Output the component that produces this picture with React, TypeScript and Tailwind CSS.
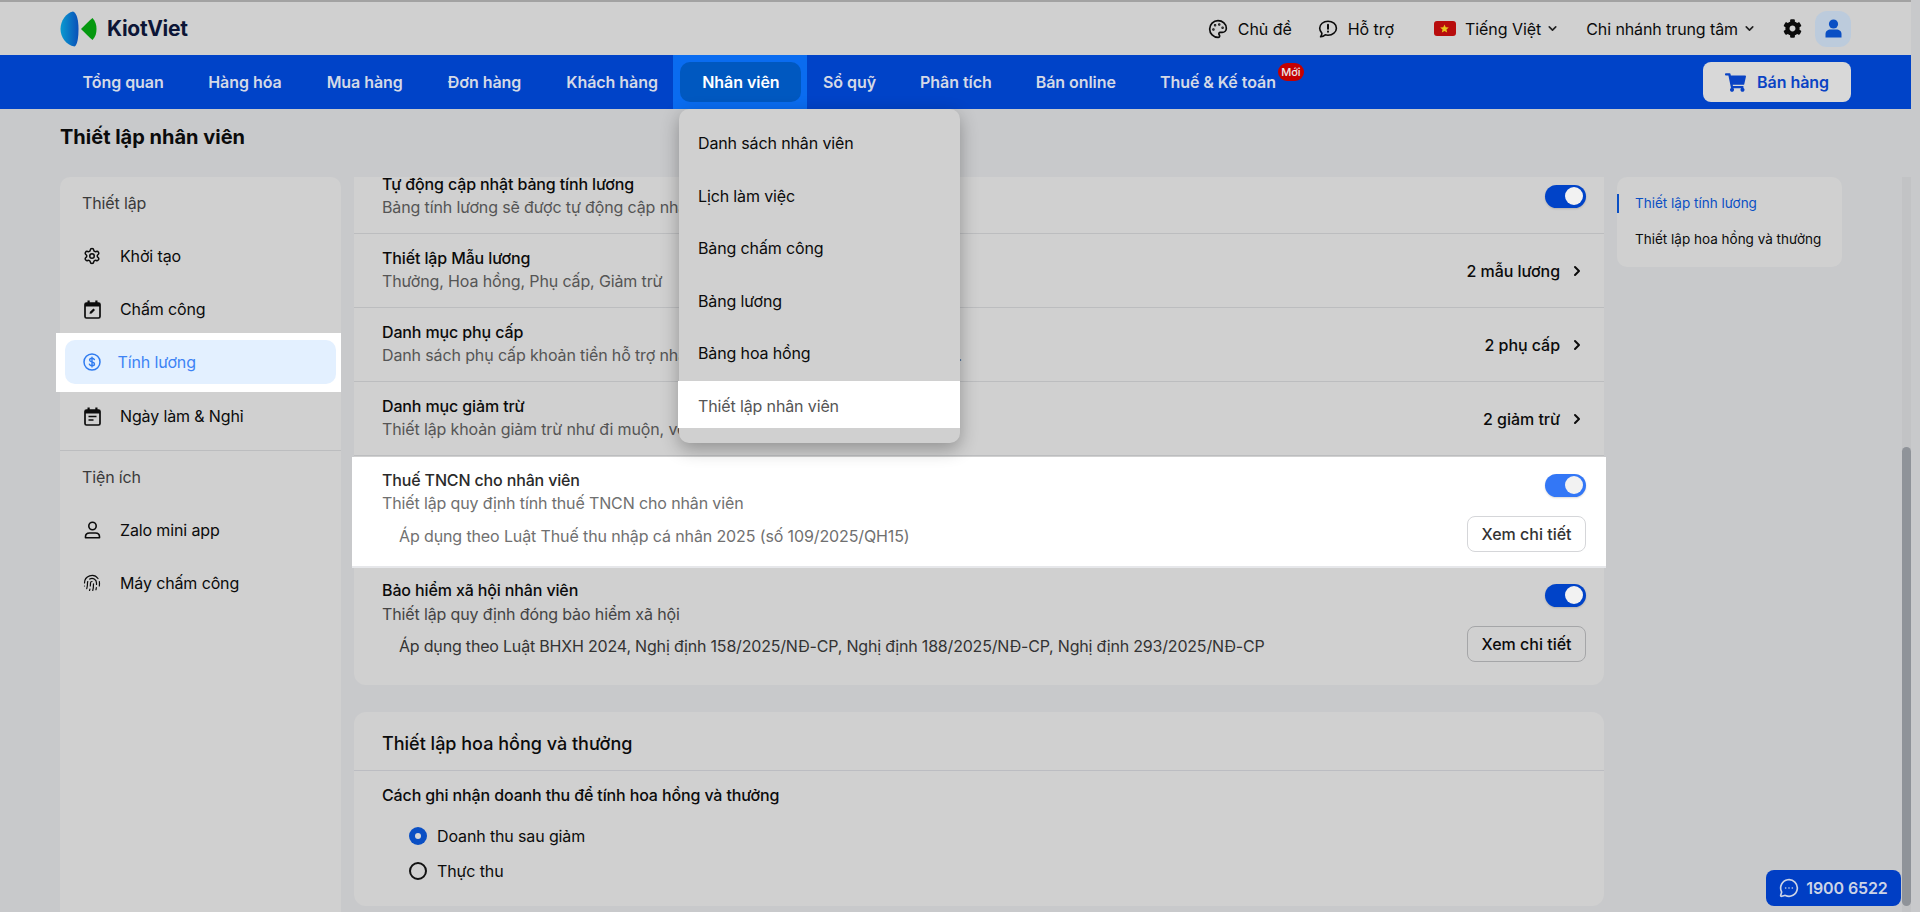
import React from "react";
import { ChevronDown, ChevronRight, Fingerprint, Palette, Settings, MessageCircleMore } from "lucide-react";
import { FaCog, FaShoppingCart } from "react-icons/fa";

const navItems = ["Tổng quan", "Hàng hóa", "Mua hàng", "Đơn hàng", "Khách hàng"];
const navItems2 = ["Sổ quỹ", "Phân tích", "Bán online"];
const menuItems = ["Danh sách nhân viên", "Lịch làm việc", "Bảng chấm công", "Bảng lương", "Bảng hoa hồng"];

function Logo() {
  return (
    <svg width="38" height="36" viewBox="0 0 38 36" className="shrink-0">
      <defs>
        <linearGradient id="lg1" x1="0" x2="1" y1="0" y2="0">
          <stop offset="0" stopColor="#0a9ad0" />
          <stop offset="1" stopColor="#0a50b8" />
        </linearGradient>
      </defs>
      <path d="M13 0.500C17 2 18.500 10 18.500 18C18.500 26 17.500 34 14.500 35.500C6 34 0.500 26 0.500 18C0.500 10 6 2 13 0.500Z" fill="url(#lg1)" />
      <path d="M32.500 7C35.500 10 36.500 14 36.500 18C36.500 22 35.500 26 32.500 29C29 26 24 21 21 18C24 15 29 10 32.500 7Z" fill="#05980f" />
    </svg>
  );
}

function HelpIcon() {
  return (
    <svg width="20" height="20" viewBox="0 0 20 20" fill="none" stroke="#0b0b0b" strokeWidth="1.6" strokeLinecap="round" strokeLinejoin="round">
      <path d="M10 2.200c4.600 0 8.400 3.100 8.400 7s-3.800 7-8.400 7c-1 0-2-.1-2.800-.4-1 .9-2.600 1.800-4.600 2 .8-1.100 1.300-2.400 1.300-3.500C2.800 13 1.700 11.200 1.700 9.200c0-3.900 3.700-7 8.300-7Z" />
      <path d="M10 5.800v4" strokeWidth="2" />
      <path d="M10 12.500v.2" strokeWidth="2" />
    </svg>
  );
}

function Flag() {
  return (
    <span className="flex h-[15px] w-[22px] items-center justify-center rounded-[3px] bg-[#b80c0c]">
      <svg width="9" height="9" viewBox="0 0 24 24"><path d="M12 1l3.200 7.600 8.300.7-6.300 5.400 1.900 8.100L12 18.500l-7.100 4.300 1.900-8.100L.5 9.300l8.300-.7z" fill="#e8c61c" /></svg>
    </span>
  );
}

function CalendarEditIcon() {
  return (
    <svg width="17" height="19" viewBox="0 0 17 19" fill="none">
      <rect x="1" y="3" width="15" height="15" rx="1.500" stroke="#0c0c0c" strokeWidth="1.700" />
      <rect x="1" y="3" width="15" height="3.500" fill="#0c0c0c" />
      <rect x="3.500" y="0.500" width="2.200" height="3.500" fill="#0c0c0c" />
      <rect x="11.300" y="0.500" width="2.200" height="3.500" fill="#0c0c0c" />
      <path d="M5.500 13.800l.5-2 3.500-3.200 1.500 1.500-3.400 3.300-2.100.4Z" fill="#0c0c0c" />
    </svg>
  );
}

function CalendarNoteIcon() {
  return (
    <svg width="17" height="19" viewBox="0 0 17 19" fill="none">
      <rect x="1" y="3" width="15" height="15" rx="1.500" stroke="#0c0c0c" strokeWidth="1.700" />
      <rect x="1" y="3" width="15" height="3.500" fill="#0c0c0c" />
      <rect x="3.500" y="0.500" width="2.200" height="3.500" fill="#0c0c0c" />
      <rect x="11.300" y="0.500" width="2.200" height="3.500" fill="#0c0c0c" />
      <path d="M4.500 9.500h8M4.500 13h5" stroke="#0c0c0c" strokeWidth="1.500" />
    </svg>
  );
}

function DollarIcon() {
  return (
    <svg width="18" height="18" viewBox="0 0 18 18" fill="none" stroke="#2f7bf0" strokeLinecap="round">
      <circle cx="9" cy="9" r="8" strokeWidth="1.500" />
      <path d="M11.400 6.600C11 5.800 10.100 5.300 9 5.300c-1.400 0-2.400.7-2.400 1.800 0 2.500 4.900 1.300 4.900 3.800 0 1.100-1.100 1.800-2.500 1.800-1.200 0-2.200-.6-2.600-1.500M9 4.100v9.800" strokeWidth="1.400" />
    </svg>
  );
}

function UserOutline() {
  return (
    <svg width="17" height="18" viewBox="0 0 17 18" fill="none" stroke="#0c0c0c" strokeWidth="1.600">
      <circle cx="8.500" cy="5" r="3.700" />
      <path d="M1.500 16.700v-1c0-2.200 1.800-3.700 4-3.700h6c2.200 0 4 1.500 4 3.700v1Z" strokeLinejoin="round" />
    </svg>
  );
}

function SideItem({ icon, label }: { icon: React.ReactNode; label: string }) {
  return (
    <div className="flex h-[53px] items-center pl-[23px]">
      <span className="flex w-[18px] justify-center">{icon}</span>
      <span className="ml-[19px] text-[16px] tracking-[-0.13px] text-[#0b0b0b]">{label}</span>
    </div>
  );
}

function Toggle({ color }: { color: string }) {
  return (
    <span className={`flex h-[23px] w-[41px] items-center justify-end rounded-full pr-[3px] shadow-[0_1px_2px_rgba(0,0,0,0.15)] ${color}`}>
      <span className="h-[18px] w-[18px] rounded-full bg-[#f2f2f2]" />
    </span>
  );
}

function RowText({ title, sub }: { title: string; sub: React.ReactNode }) {
  return (
    <div className="flex flex-col pb-[1px] tracking-[-0.13px]">
      <span className="text-[16px] font-medium leading-[23px] text-[#0b0b0b]">{title}</span>
      <span className="text-[16px] leading-[23px] text-[#555]">{sub}</span>
    </div>
  );
}

function LinkRow({ title, sub, value }: { title: string; sub: React.ReactNode; value: string }) {
  return (
    <div className="flex h-[74px] items-center justify-between border-b border-[#bcbdbf] pl-[28px] pr-[19px]">
      <RowText title={title} sub={sub} />
      <div className="flex items-center gap-[9px] text-[16px] font-medium tracking-[-0.05px] text-[#0b0b0b]">
        {value}
        <ChevronRight size={16} strokeWidth={3} />
      </div>
    </div>
  );
}

export default function App() {
  return (
    <div className="relative flex h-[912px] w-[1920px] overflow-hidden bg-[#c8c9cb] font-['Inter','Noto_Sans',sans-serif]">
      <div className="flex w-[1911px] flex-col">
        <header className="flex h-[55px] shrink-0 items-center border-t-2 border-[#a2a2a2] bg-[#d0d0d0] pl-[60px] pr-[60px] tracking-[-0.05px]">
          <Logo />
          <span className="ml-[9px] text-[21px] font-bold tracking-[-0.3px] text-[#0c1536]">KiotViet</span>
          <div className="flex-1" />
          <Palette size={20} strokeWidth={2} className="text-[#0b0b0b]" />
          <span className="ml-[10px] text-[16px] text-[#0b0b0b]">Chủ đề</span>
          <span className="ml-[26px]"><HelpIcon /></span>
          <span className="ml-[10px] text-[16px] text-[#0b0b0b]">Hỗ trợ</span>
          <span className="ml-[40px]"><Flag /></span>
          <span className="ml-[9px] text-[16px] text-[#0b0b0b]">Tiếng Việt</span>
          <ChevronDown size={13} strokeWidth={3} className="ml-[5px] text-[#222]" />
          <span className="ml-[27px] text-[16px] tracking-[-0.1px] text-[#0b0b0b]">Chi nhánh trung tâm</span>
          <ChevronDown size={13} strokeWidth={3} className="ml-[5px] text-[#222]" />
          <FaCog size={19} className="ml-[27px] text-[#0b0b0b]" />
          <span className="ml-[13px] flex h-[36px] w-[36px] items-center justify-center rounded-[12px] bg-[#bccbdc]">
            <svg width="17" height="19" viewBox="0 0 17 19" fill="#0a4fc4"><circle cx="8.500" cy="5" r="4.600" /><path d="M0.500 18.500v-3.500c0-3 2.400-4.500 5-4.500h6c2.600 0 5 1.500 5 4.500v3.500Z" /></svg>
          </span>
        </header>

        <nav className="flex h-[54px] shrink-0 items-center bg-[#0043c8] pl-[60px] pr-[60px] text-[16px] font-semibold tracking-[-0.05px] text-[#d4d9e6]">
          {navItems.map((n) => (
            <span key={n} className="px-[22.500px] first:pr-[22px]">{n}</span>
          ))}
          <span className="-ml-[7px] -mr-[6.500px] flex h-[54px] w-[134px] items-center bg-[#0a6cf0] pl-[7px]">
            <span className="flex h-[40px] w-[121px] items-center justify-center rounded-[10px] bg-[#0058c0] text-white">Nhân viên</span>
          </span>
          {navItems2.map((n) => (
            <span key={n} className="px-[22px]">{n}</span>
          ))}
          <span className="relative pl-[22px]">
            Thuế & Kế toán
            <span className="absolute -right-[28px] -top-[7px] flex h-[18px] w-[26px] items-center justify-center rounded-full bg-[#c40000] text-[11px] font-medium text-[#e8e8e8]">Mới</span>
          </span>
          <div className="flex-1" />
          <button className="flex h-[40px] w-[148px] items-center justify-center gap-[11px] rounded-[8px] bg-[#d8d8d8] text-[16px] font-semibold text-[#0a43c4]">
            <FaShoppingCart size={21} />
            Bán hàng
          </button>
        </nav>

        <div className="h-[68px] shrink-0 pl-[60px] pt-[14px] text-[20px] font-bold leading-[28px] text-[#0b0b0b]">Thiết lập nhân viên</div>

        <div className="flex min-h-0 flex-1 pl-[60px]">
          <aside className="flex w-[281px] shrink-0 flex-col rounded-t-[10px] bg-[#d0d0d0] pt-[14px]">
            <div className="pl-[22px] text-[16px] leading-[24px] tracking-[-0.13px] text-[#3a3a3a]">Thiết lập</div>
            <div className="mt-[14.500px]">
              <SideItem icon={<Settings size={20} strokeWidth={2} className="text-[#0c0c0c]" />} label="Khởi tạo" />
              <SideItem icon={<CalendarEditIcon />} label="Chấm công" />
              <div className="relative z-10 -mb-[2px] -ml-[4px] -mt-[3px] flex h-[59px] w-[285px] items-center bg-white pl-[9px] pr-[5px]">
                <div className="flex h-[44px] w-full items-center rounded-[10px] bg-[#e3f0ff] pl-[17.500px]">
                  <DollarIcon />
                  <span className="ml-[17px] text-[16px] tracking-[-0.13px] text-[#3d83f5]">Tính lương</span>
                </div>
              </div>
              <SideItem icon={<CalendarNoteIcon />} label="Ngày làm & Nghỉ" />
            </div>
            <div className="mt-[7px] h-px bg-[#bcbdbf]" />
            <div className="mt-[14px] pl-[22px] text-[16px] leading-[24px] tracking-[-0.13px] text-[#3a3a3a]">Tiện ích</div>
            <div className="mt-[14.500px]">
              <SideItem icon={<UserOutline />} label="Zalo mini app" />
              <SideItem icon={<Fingerprint size={20} strokeWidth={1.600} className="text-[#0c0c0c]" />} label="Máy chấm công" />
            </div>
          </aside>

          <main className="ml-[11px] flex w-[1254px] shrink-0 flex-col overflow-hidden px-[2px]">
            <section className="rounded-b-[12px] bg-[#d0d0d0]">
              <div className="-mt-[18px]">
                <div className="flex h-[75px] items-center justify-between border-b border-[#bcbdbf] pl-[28px] pr-[18px]">
                  <RowText title="Tự động cập nhật bảng tính lương" sub="Bảng tính lương sẽ được tự động cập nhật" />
                  <Toggle color="bg-[#0043c8]" />
                </div>
                <LinkRow title="Thiết lập Mẫu lương" sub="Thưởng, Hoa hồng, Phụ cấp, Giảm trừ" value="2 mẫu lương" />
                <LinkRow title="Danh mục phụ cấp" sub={<>Danh sách phụ cấp khoản tiền hỗ trợ nhân viên theo quy định <span className="tracking-[-0.5px]">của công ty bạn.</span></>} value="2 phụ cấp" />
                <LinkRow title="Danh mục giảm trừ" sub="Thiết lập khoản giảm trừ như đi muộn, về sớm" value="2 giảm trừ" />
              </div>
              <div className="relative z-10 -mx-[2px] mt-px flex h-[111px] border-b-2 border-[#e6e7ea] bg-white pl-[30px] pr-[20px] pt-[12px]">
                <div className="flex-1">
                  <div className="text-[16px] font-medium leading-[23px] tracking-[-0.15px] text-[#2a2a2a]">Thuế TNCN cho nhân viên</div>
                  <div className="text-[16px] leading-[23px] tracking-[-0.13px] text-[#707070]">Thiết lập quy định tính thuế TNCN cho nhân viên</div>
                  <div className="mt-[9.500px] pl-[17px] text-[16px] leading-[23px] tracking-[-0.12px] text-[#707070]">Áp dụng theo Luật Thuế thu nhập cá nhân 2025 (số 109/2025/QH15)</div>
                </div>
                <div className="flex flex-col items-end pt-[4.500px]">
                  <Toggle color="bg-[#3377f6]" />
                  <button className="mt-[19px] h-[36px] w-[119px] rounded-[8px] border border-[#d5d6d9] bg-white text-[16px] font-medium text-[#333]">Xem chi tiết</button>
                </div>
              </div>
              <div className="flex h-[117px] pl-[28px] pr-[18px] pt-[10.500px]">
                <div className="flex-1">
                  <div className="text-[16px] font-medium leading-[23px] tracking-[-0.13px] text-[#0b0b0b]">Bảo hiểm xã hội nhân viên</div>
                  <div className="text-[16px] leading-[24px] tracking-[-0.13px] text-[#444]">Thiết lập quy định đóng bảo hiểm xã hội</div>
                  <div className="mt-[9px] pl-[17px] text-[16px] leading-[23px] tracking-[-0.19px] text-[#333]">Áp dụng theo Luật BHXH 2024, Nghị định 158/2025/NĐ-CP, Nghị định 188/2025/NĐ-CP, Nghị định 293/2025/NĐ-CP</div>
                </div>
                <div className="flex flex-col items-end pt-[5px]">
                  <Toggle color="bg-[#0043c8]" />
                  <button className="mt-[19px] h-[36px] w-[119px] rounded-[8px] border border-[#a5a6a8] text-[16px] font-medium text-[#0b0b0b]">Xem chi tiết</button>
                </div>
              </div>
            </section>
            <section className="mt-[27px] h-[194px] shrink-0 rounded-[12px] bg-[#d0d0d0]">
              <div className="flex h-[59px] items-center border-b border-[#bcbdc2] pl-[28px] pt-[4px] text-[18px] font-medium text-[#0b0b0b]">Thiết lập hoa hồng và thưởng</div>
              <div className="pl-[28px] pt-[12px] text-[16px] font-medium leading-[24px] tracking-[-0.13px] text-[#0b0b0b]">Cách ghi nhận doanh thu để tính hoa hồng và thưởng</div>
              <div className="mt-[11px] flex h-[35px] items-center pl-[55px] text-[16px] tracking-[-0.13px] text-[#0b0b0b]">
                <span className="flex h-[18px] w-[18px] items-center justify-center rounded-full bg-[#0a4fc4]"><span className="h-[6px] w-[6px] rounded-full bg-[#d8d8d8]" /></span>
                <span className="ml-[10px]">Doanh thu sau giảm</span>
              </div>
              <div className="flex h-[35px] items-center pl-[55px] text-[16px] tracking-[-0.13px] text-[#0b0b0b]">
                <span className="h-[18px] w-[18px] rounded-full border-2 border-[#111]" />
                <span className="ml-[10px]">Thực thu</span>
              </div>
            </section>
          </main>

          <aside className="ml-[11px] h-[90px] w-[225px] shrink-0 rounded-[10px] bg-[#d0d0d0] pt-[11.500px] text-[13.500px]">
            <div className="flex h-[30px] items-center text-[#0a4fc4]">
              <span className="h-[19px] w-[2px] bg-[#0a4fc4]" />
              <span className="ml-[16px]">Thiết lập tính lương</span>
            </div>
            <div className="mt-[6px] flex h-[30px] items-center pl-[18px] text-[#0b0b0b]">Thiết lập hoa hồng và thưởng</div>
          </aside>
        </div>
      </div>

      <div className="absolute left-[679px] top-[109px] z-20 h-[334px] w-[281px] rounded-[10px] bg-[#d0d0d0] pt-[7.700px] text-[16px] tracking-[-0.13px] shadow-[0_6px_18px_rgba(0,0,0,0.3)]">
        {menuItems.map((m) => (
          <div key={m} className="flex h-[52.600px] items-center pl-[19px] text-[#0b0b0b]">{m}</div>
        ))}
        <div className="-mt-[1.500px] flex h-[52.600px] items-center">
          <div className="-ml-[1px] flex h-[47px] w-[282px] items-center bg-white pl-[20px] pt-[3px] text-[#555]">Thiết lập nhân viên</div>
        </div>
      </div>

      <div className="absolute left-[1902px] top-[177px] h-[735px] w-[9px] bg-[#c2c3c5]">
        <div className="mt-[270px] h-[459px] w-[9px] rounded-full bg-[#8f9399]" />
      </div>

      <button className="absolute left-[1766px] top-[870px] flex h-[36px] w-[135px] items-center justify-center gap-[7px] rounded-[8px] bg-[#003ec4] text-[16px] font-semibold tracking-[-0.1px] text-[#cdd4e6]">
        <MessageCircleMore size={20} strokeWidth={2} />
        1900 6522
      </button>
    </div>
  );
}
